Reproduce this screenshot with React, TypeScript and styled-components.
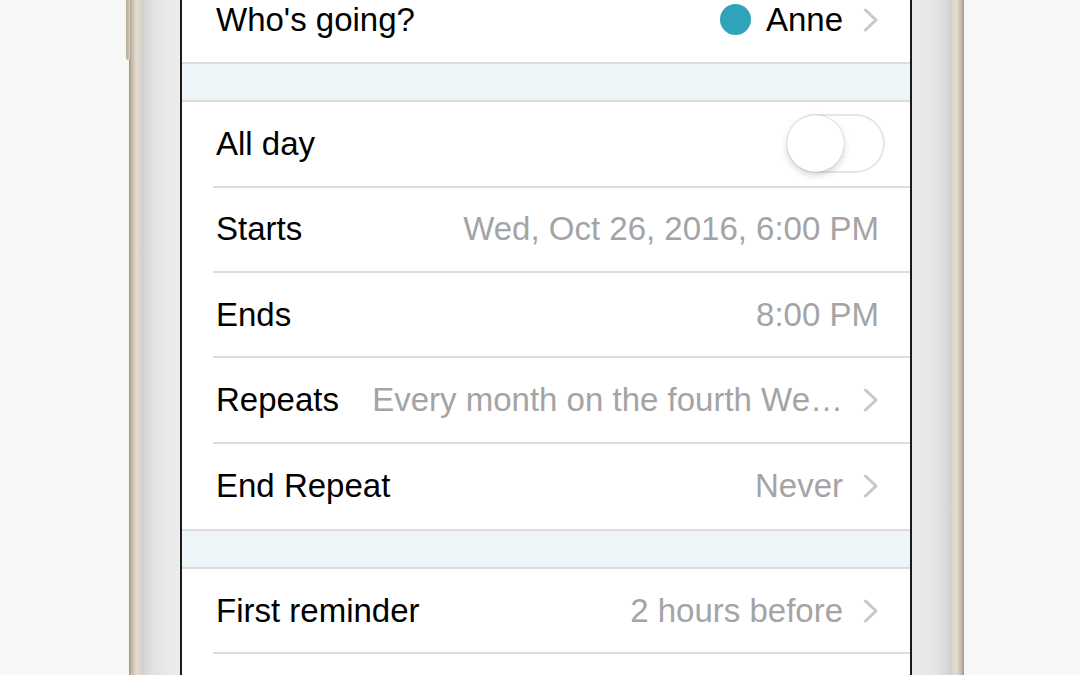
import React, { FC } from "react";
import styled, { createGlobalStyle } from "styled-components";

const GlobalStyle = createGlobalStyle`
  html, body {
    margin: 0;
    padding: 0;
    background: #f7f7f7;
  }
  body {
    font-family: "Liberation Sans", Arial, sans-serif;
  }
  * {
    box-sizing: border-box;
  }
`;

const Page = styled.div`
  display: flex;
  height: 675px;
  padding-left: 129px;
  overflow: hidden;
  background: #f7f7f7;
`;

const Rim = styled.div<{ $side: "left" | "right" }>`
  position: relative;
  width: 12px;
  flex-shrink: 0;
  background: linear-gradient(
    to ${p => (p.$side === "left" ? "right" : "left")},
    #9f9381 0%,
    #c4b8a6 22%,
    #e4dcd0 60%,
    #dcd4c8 100%
  );
`;

const SideButton = styled.div`
  position: absolute;
  left: -3px;
  top: 0;
  width: 4px;
  height: 60px;
  border-radius: 0 0 2px 2px;
  background: linear-gradient(to right, #b3a791, #d8cfc0);
`;

const Bezel = styled.div<{ $side: "left" | "right"; $width: number }>`
  width: ${p => p.$width}px;
  flex-shrink: 0;
  background: linear-gradient(
    to ${p => (p.$side === "left" ? "right" : "left")},
    #cfcfd1 0%,
    #d8d9db 16%,
    #e2e3e5 36%,
    #e8e8ea 62%,
    #ececed 100%
  );
`;

const Screen = styled.div`
  width: 732px;
  flex-shrink: 0;
  border-left: 2px solid #1b1b1b;
  border-right: 2px solid #1b1b1b;
  background: #ffffff;
  overflow: hidden;
`;

const List = styled.div`
  margin-top: -23px;
`;

const Group = styled.div<{ $first?: boolean; $open?: boolean }>`
  border-top: ${p => (p.$first ? "none" : "2px solid #dcdcdc")};
  border-bottom: ${p => (p.$open ? "none" : "2px solid #dcdcdc")};
  background: #ffffff;
`;

const Gap = styled.div`
  height: 36px;
  background: #eef5f8;
`;

const Row = styled.div`
  height: 85.33px;
  padding-left: 31px;
`;

const RowInner = styled.div<{ $divider: boolean }>`
  height: 100%;
  display: flex;
  align-items: center;
  padding-right: 31px;
  border-bottom: ${p => (p.$divider ? "2px solid #dcdcdc" : "none")};
  font-size: 33px;
`;

const Label = styled.span`
  margin-left: 3px;
  color: #000000;
  white-space: nowrap;
`;

const Value = styled.div`
  flex: 1;
  min-width: 0;
  display: flex;
  justify-content: flex-end;
  align-items: center;
  margin-left: 24px;
`;

const ValueText = styled.span<{ $muted: boolean }>`
  color: ${p => (p.$muted ? "#a4a4a6" : "#000000")};
  white-space: nowrap;
  overflow: hidden;
  text-overflow: ellipsis;
`;

const Dot = styled.span`
  width: 31px;
  height: 31px;
  flex-shrink: 0;
  border-radius: 50%;
  background: #2fa4b9;
  margin-right: 15px;
`;

const Chevron = styled.svg`
  width: 16px;
  height: 24px;
  flex-shrink: 0;
  margin-left: 20px;
`;

const Track = styled.div`
  width: 98px;
  height: 59px;
  flex-shrink: 0;
  margin-right: -6px;
  display: flex;
  align-items: center;
  border: 2px solid #e6e6e8;
  border-radius: 30px;
  background: #ffffff;
`;

const Knob = styled.div`
  width: 57px;
  height: 57px;
  margin-left: -2px;
  border-radius: 50%;
  background: #ffffff;
  box-shadow: 0 3px 7px rgba(0, 0, 0, 0.18), 0 0 1px rgba(0, 0, 0, 0.35);
`;

const ChevronIcon: FC = () => (
  <Chevron viewBox="0 0 16 24">
    <path
      d="M2.5 2 L13 12 L2.5 22"
      fill="none"
      stroke="#c7c7cc"
      strokeWidth="3"
      strokeLinecap="round"
      strokeLinejoin="round"
    />
  </Chevron>
);

interface IRow {
  label: string;
  value?: string;
  muted?: boolean;
  chevron?: boolean;
  dot?: boolean;
  toggle?: boolean;
}

interface IGroup {
  rows: IRow[];
  // the list goes on below the bottom of the screen
  open?: boolean;
}

const groups: IGroup[] = [
  { rows: [{ label: "Who's going?", value: "Anne", muted: false, chevron: true, dot: true }] },
  {
    rows: [
      { label: "All day", toggle: true },
      { label: "Starts", value: "Wed, Oct 26, 2016, 6:00 PM", muted: true },
      { label: "Ends", value: "8:00 PM", muted: true },
      { label: "Repeats", value: "Every month on the fourth We\u2026", muted: true, chevron: true },
      { label: "End Repeat", value: "Never", muted: true, chevron: true }
    ]
  },
  {
    rows: [{ label: "First reminder", value: "2 hours before", muted: true, chevron: true }],
    open: true
  }
];

const SettingRow: FC<{ row: IRow; divider: boolean }> = ({ row, divider }) => (
  <Row>
    <RowInner $divider={divider}>
      <Label>{row.label}</Label>
      <Value>
        {row.dot && <Dot />}
        {row.value && <ValueText $muted={!!row.muted}>{row.value}</ValueText>}
        {row.chevron && <ChevronIcon />}
        {row.toggle && (
          <Track>
            <Knob />
          </Track>
        )}
      </Value>
    </RowInner>
  </Row>
);

const App: FC = () => (
  <>
    <GlobalStyle />
    <Page>
      <Rim $side="left">
        <SideButton />
      </Rim>
      <Bezel $side="left" $width={39} />
      <Screen>
        <List>
          {groups.map((group, gi) => (
            <React.Fragment key={gi}>
              {gi > 0 && <Gap />}
              <Group $first={gi === 0} $open={group.open}>
                {group.rows.map((row, ri) => (
                  <SettingRow
                    key={row.label}
                    row={row}
                    divider={ri < group.rows.length - 1 || !!group.open}
                  />
                ))}
              </Group>
            </React.Fragment>
          ))}
        </List>
      </Screen>
      <Bezel $side="right" $width={40} />
      <Rim $side="right" />
    </Page>
  </>
);

export default App;
